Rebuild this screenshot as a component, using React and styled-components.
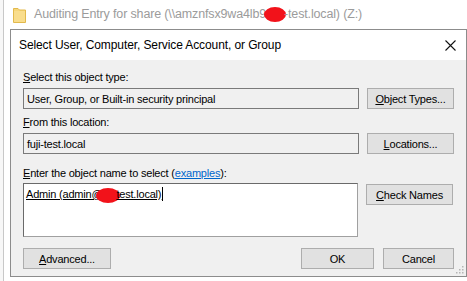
import styled, { createGlobalStyle } from 'styled-components';

const GlobalStyle = createGlobalStyle`
    html, body {
        margin: 0;
        padding: 0;
        background: #ffffff;
    }
    body {
        font-family: "Liberation Sans", Arial, sans-serif;
        font-size: 11px;
        letter-spacing: -0.2px;
        color: #000;
    }
`;

const Page = styled.div`
    width: 467px;
    height: 281px;
    display: flex;
    flex-direction: row;
    overflow: hidden;
    background: #ffffff;
`;

const BehindEdge = styled.div`
    width: 3px;
    border-right: 1px solid #c8c8c8;
    background: #f7f7f7;
`;

const Main = styled.div`
    flex: 1;
    display: flex;
    flex-direction: column;
`;

const BackTitleBar = styled.div`
    height: 29px;
    display: flex;
    align-items: center;
    gap: 8px;
    padding-left: 9px;
    color: #9b9b9b;
    font-size: 12.5px;
    letter-spacing: -0.15px;
    white-space: nowrap;
`;

const Blot = styled.span`
    display: inline-block;
    width: ${p => p.$w}px;
    height: ${p => p.$h}px;
    background: #f2121a;
    border-radius: 50%;
    vertical-align: middle;
    margin: 0 ${p => p.$right ?? -2}px 0 ${p => p.$left ?? -2}px;
`;

const Dialog = styled.div`
    margin-left: 6px;
    width: 455px;
    height: 246px;
    border: 1px solid #8c8c8c;
    display: flex;
    flex-direction: column;
    background: #f0f0f0;
`;

const DialogTitle = styled.div`
    height: 30px;
    background: #ffffff;
    display: flex;
    align-items: center;
    justify-content: space-between;
    padding: 0 10px 0 8px;
    font-size: 12px;
    letter-spacing: -0.1px;
`;

const Body = styled.div`
    flex: 1;
    position: relative;
    padding: 10px 12px 0 12px;
    display: flex;
    flex-direction: column;
`;

const Label = styled.div`
    line-height: 15px;
    height: 15px;
    margin-top: ${p => p.$top || 0}px;
    margin-bottom: ${p => p.$bottom || 3}px;
    white-space: nowrap;
`;

const Key = styled.span`
    text-decoration: underline;
`;

const LinkText = styled.span`
    color: #0066cc;
    text-decoration: underline;
`;

const Row = styled.div`
    display: flex;
    align-items: flex-start;
    gap: 8px;
`;

const Field = styled.div`
    width: 336px;
    height: 21px;
    box-sizing: border-box;
    border: 1px solid #7a7a7a;
    background: #f0f0f0;
    display: flex;
    align-items: center;
    padding-left: 3px;
    white-space: nowrap;
`;

const TextArea = styled.div`
    width: 335px;
    height: 54px;
    box-sizing: border-box;
    border: 1px solid #a0a0a0;
    border-top-color: #6a6a6a;
    border-left-color: #6a6a6a;
    background: #ffffff;
    padding: 3px 2px;
    white-space: nowrap;
`;

const Resolved = styled.span`
    text-decoration: underline;
    line-height: 15px;
`;

const Caret = styled.span`
    display: inline-block;
    width: 1px;
    height: 14px;
    background: #000;
    vertical-align: -3px;
    margin-left: 1px;
`;

const Button = styled.div`
    width: ${p => p.$w || 87}px;
    height: 21px;
    box-sizing: border-box;
    border: 1px solid #adadad;
    background: #e1e1e1;
    display: flex;
    align-items: center;
    justify-content: center;
    margin-top: ${p => p.$top || 0}px;
    white-space: nowrap;
`;

const Footer = styled.div`
    margin-top: 11px;
    display: flex;
    align-items: center;
    gap: 9px;
`;

const Spacer = styled.div`
    flex: 1;
`;

const Grip = styled.svg`
    position: absolute;
    right: 2px;
    bottom: 2px;
`;

const FolderIcon = () => (
    <svg width="13" height="16" viewBox="0 0 13 16">
        <path d="M0.5 1.5 H5 L6.5 3 H12.5 V15.5 H0.5 Z" fill="#f6d67a" stroke="#e2b94c" strokeWidth="1" />
        <rect x="1" y="4" width="11" height="11" fill="#f9dd8c" />
    </svg>
);

const CloseIcon = () => (
    <svg width="11" height="11" viewBox="0 0 11 11">
        <path d="M0.5 0.5 L10.5 10.5 M10.5 0.5 L0.5 10.5" stroke="#111" strokeWidth="1.1" />
    </svg>
);

export default function App() {
    return (
        <Page>
            <GlobalStyle />
            <BehindEdge />
            <Main>
                <BackTitleBar>
                    <FolderIcon />
                    <span>
                        Auditing Entry for share (\\amznfsx9wa4lb9<Blot $w={22} $h={15} />-test.local) (Z:)
                    </span>
                </BackTitleBar>
                <Dialog>
                    <DialogTitle>
                        <span>Select User, Computer, Service Account, or Group</span>
                        <CloseIcon />
                    </DialogTitle>
                    <Body>
                        <Label><Key>S</Key>elect this object type:</Label>
                        <Row>
                            <Field>User, Group, or Built-in security principal</Field>
                            <Button><Key>O</Key>bject Types...</Button>
                        </Row>
                        <Label $top={6}><Key>F</Key>rom this location:</Label>
                        <Row>
                            <Field>fuji-test.local</Field>
                            <Button><Key>L</Key>ocations...</Button>
                        </Row>
                        <Label $top={12} $bottom={2}>
                            <Key>E</Key>nter the object name to select (<LinkText>examples</LinkText>):
                        </Label>
                        <Row>
                            <TextArea>
                                <Resolved>Admin (admin@<Blot $w={24} $h={15} $left={-6} $right={-4} />test.local)</Resolved>
                                <Caret />
                            </TextArea>
                            <Button $top={1}><Key>C</Key>heck Names</Button>
                        </Row>
                        <Footer>
                            <Button $w={88}><Key>A</Key>dvanced...</Button>
                            <Spacer />
                            <Button $w={73}>OK</Button>
                            <Button $w={71}>Cancel</Button>
                        </Footer>
                        <Grip width="8" height="8" viewBox="0 0 8 8">
                            <rect x="6" y="0" width="1.5" height="1.5" fill="#b5b5b5" />
                            <rect x="3" y="3" width="1.5" height="1.5" fill="#b5b5b5" />
                            <rect x="6" y="3" width="1.5" height="1.5" fill="#b5b5b5" />
                            <rect x="0" y="6" width="1.5" height="1.5" fill="#b5b5b5" />
                            <rect x="3" y="6" width="1.5" height="1.5" fill="#b5b5b5" />
                            <rect x="6" y="6" width="1.5" height="1.5" fill="#b5b5b5" />
                        </Grip>
                    </Body>
                </Dialog>
            </Main>
        </Page>
    );
}
